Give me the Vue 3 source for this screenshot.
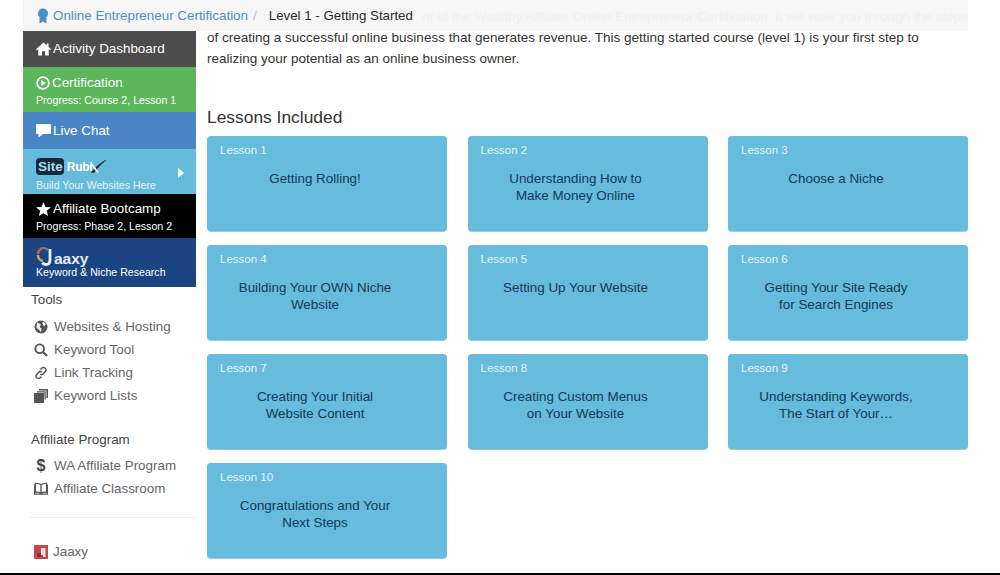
<script setup>
const lessons = [
  { n: 1, lines: ['Getting Rolling!'] },
  { n: 2, lines: ['Understanding How to', 'Make Money Online'] },
  { n: 3, lines: ['Choose a Niche'] },
  { n: 4, lines: ['Building Your OWN Niche', 'Website'] },
  { n: 5, lines: ['Setting Up Your Website'] },
  { n: 6, lines: ['Getting Your Site Ready', 'for Search Engines'] },
  { n: 7, lines: ['Creating Your Initial', 'Website Content'] },
  { n: 8, lines: ['Creating Custom Menus', 'on Your Website'] },
  { n: 9, lines: ['Understanding Keywords,', 'The Start of Your…'] },
  { n: 10, lines: ['Congratulations and Your', 'Next Steps'] }
]
</script>

<template>
  <div class="page">
    <header class="crumbs">
      <svg class="ribbon" viewBox="0 0 12 16" width="12" height="16">
        <circle cx="6" cy="5.5" r="5" fill="#4a90c4" />
        <path d="M2.5 9.5V15.5L6 13.5L9.5 15.5V9.5Z" fill="#4a90c4" />
      </svg>
      <a class="crumb-link">Online Entrepreneur Certification</a>
      <span class="crumb-sep">/</span>
      <span class="crumb-here">Level 1 - Getting Started</span>
      <span class="crumb-ghost">nt of the Wealthy Affiliate Online Entrepreneur Certification. It will walk you through the steps</span>
    </header>

    <div class="body">
      <aside class="side">
        <nav class="blocks">
          <a class="block dash">
            <span class="row">
              <svg viewBox="0 0 16 14" width="15" height="14"><path d="M8 0L0 7.2L1 8.3L2.4 7.1V14H6.4V9.4H9.6V14H13.6V7.1L15 8.3L16 7.2L13.4 4.8V1H11.4V3Z" fill="#fff" /></svg>
              Activity Dashboard
            </span>
          </a>
          <a class="block cert">
            <span class="row">
              <svg viewBox="0 0 14 14" width="14" height="14"><circle cx="7" cy="7" r="5.9" fill="none" stroke="#fff" stroke-width="1.7" /><path d="M5.3 4L10 7L5.3 10Z" fill="#fff" /></svg>
              Certification
            </span>
            <small>Progress: Course 2, Lesson 1</small>
          </a>
          <a class="block chat">
            <span class="row">
              <svg viewBox="0 0 15 14" width="15" height="14"><path d="M1 0H14Q15 0 15 1V9Q15 10 14 10H7L2.5 13.5V10H1Q0 10 0 9V1Q0 0 1 0Z" fill="#fff" /></svg>
              Live Chat
            </span>
          </a>
          <a class="block rubix">
            <span class="logo-row">
              <span class="site-pill">Site</span>
              <span class="rubix-word">Rubi</span>
              <svg class="rubix-x" viewBox="0 0 18 15" width="18" height="16"><path d="M1 14C5 9 11 3 17 1C12 5 7 10 4 14.500Z" fill="#1b2a38" /><path d="M1 5L8 14" stroke="#fff" stroke-width="1.800" /></svg>
            </span>
            <small class="rubix-note">Build Your Websites Here</small>
            <svg class="caret" viewBox="0 0 6 10" width="6" height="10"><path d="M0 0L6 5L0 10Z" fill="#fff" /></svg>
          </a>
          <a class="block camp">
            <span class="row">
              <svg viewBox="0 0 16 15" width="15" height="14"><path d="M8 0L10.200 5.300L16 5.700L11.500 9.400L13 15L8 12L3 15L4.500 9.400L0 5.700L5.800 5.300Z" fill="#fff" /></svg>
              Affiliate Bootcamp
            </span>
            <small>Progress: Phase 2, Lesson 2</small>
          </a>
          <a class="block jaaxy">
            <span class="jaaxy-row">
              <svg class="jaaxy-mark" viewBox="0 0 17 19" width="17" height="19">
                <path d="M2 7A6 6 0 0 1 8 1" fill="none" stroke="#b5653f" stroke-width="2.500" />
                <path d="M2 8A6 6 0 0 0 7 14" fill="none" stroke="#c9a945" stroke-width="2.500" />
                <path d="M8 1A6 6 0 0 1 12 3" fill="none" stroke="#5a86b8" stroke-width="2" />
                <path d="M14 2V13Q14 17.500 10 17.500Q7.500 17.500 6.500 15.500" fill="none" stroke="#e8eef6" stroke-width="2.800" />
              </svg>
              <span class="jaaxy-word">aaxy</span>
            </span>
            <small class="jaaxy-note">Keyword &amp; Niche Research</small>
          </a>
        </nav>

        <h4 class="group first">Tools</h4>
        <ul class="links">
          <li>
            <svg viewBox="0 0 14 14" width="14" height="14"><circle cx="7" cy="7" r="6.500" fill="#555" /><path d="M3 2.500L7 4.500L5.500 7L7.500 8.500L7 12L4.800 9.500L2.500 8ZM9 1.500L12 4L10 6.500L8.500 4Z" fill="#f4f4f4" /></svg>
            Websites &amp; Hosting
          </li>
          <li>
            <svg viewBox="0 0 14 14" width="14" height="14"><circle cx="5.700" cy="5.700" r="4.300" fill="none" stroke="#555" stroke-width="1.900" /><path d="M8.800 8.800L13 13" stroke="#555" stroke-width="2.300" /></svg>
            Keyword Tool
          </li>
          <li>
            <svg viewBox="0 0 14 14" width="14" height="14"><path d="M6.500 3.500L8 2Q9.500 0.800 11 2Q12.800 3.500 11.500 5.200L9 8Q7.600 9.200 6.200 8" fill="none" stroke="#555" stroke-width="1.500" /><path d="M7.500 10.500L6 12Q4.500 13.200 3 12Q1.200 10.500 2.500 8.800L5 6Q6.400 4.800 7.800 6" fill="none" stroke="#555" stroke-width="1.500" /></svg>
            Link Tracking
          </li>
          <li>
            <svg viewBox="0 0 14 14" width="14" height="14"><path d="M5 0H14V9H12.500V1.500H5Z" fill="#555" /><path d="M3 2.200H11.800V10.500H10.500V3.500H3Z" fill="#555" /><rect x="0" y="4" width="10" height="10" fill="#555" /></svg>
            Keyword Lists
          </li>
        </ul>

        <h4 class="group second">Affiliate Program</h4>
        <ul class="links tight">
          <li>
            <span class="dollar">$</span>
            WA Affiliate Program
          </li>
          <li>
            <svg viewBox="0 0 15 14" width="14" height="14"><path d="M7.500 2.500Q5 0.500 1.500 1V10.500Q5 10 7.500 11.500Q10 10 13.500 10.500V1Q10 0.500 7.500 2.500ZM7.500 2.500V11.500M1.500 3H0.500V12.500H14.500V3H13.500" fill="none" stroke="#555" stroke-width="1.400" /></svg>
            Affiliate Classroom
          </li>
        </ul>

        <hr class="rule" />

        <a class="foot-link">
          <svg viewBox="0 0 14 14" width="14" height="14"><rect width="14" height="14" fill="#c0484f" /><path d="M7 8V3H11.500V12H9V10H7V12H2.500V8Z" fill="#f3dcdc" /><rect x="2.500" y="8" width="4.500" height="4" fill="#8e2f36" /></svg>
          Jaaxy
        </a>
      </aside>

      <main class="main">
        <p class="intro">of creating a successful online business that generates revenue. This getting started course (level 1) is your first step to realizing your potential as an online business owner.</p>
        <h3 class="heading">Lessons Included</h3>
        <div class="grid">
          <a v-for="l in lessons" :key="l.n" class="card">
            <span class="num">Lesson {{ l.n }}</span>
            <span class="title">
              <span v-for="t in l.lines" :key="t" class="title-line">{{ t }}</span>
            </span>
          </a>
        </div>
      </main>
    </div>
    <div class="bottom-line"></div>
  </div>
</template>

<style scoped>
.page {
  width: 1000px;
  height: 575px;
  overflow: hidden;
  background: #fff;
  font-family: "Liberation Sans", Arial, sans-serif;
  color: #333;
  display: flex;
  flex-direction: column;
}
.page * { box-sizing: border-box; }

.crumbs {
  position: relative;
  flex: none;
  height: 31px;
  margin: 0 32px 0 23px;
  padding: 0 0 0 14px;
  background: #f6f6f6;
  display: flex;
  align-items: center;
  font-size: 13.4px;
}
.ribbon { margin-right: 4px; }
.crumb-link { color: #4a8fc5; }
.crumb-sep { color: #bbb; margin: 0 12px 0 5px; }
.crumb-here { color: #2a2a2a; font-size: 13.3px; }
.crumb-ghost {
  position: absolute;
  right: 0;
  top: 9px;
  font-size: 13.4px;
  color: #efefef;
  white-space: nowrap;
}

.body {
  flex: 1;
  display: flex;
  min-height: 0;
  padding-left: 23px;
}

.side {
  flex: none;
  width: 173px;
}
.blocks { display: flex; flex-direction: column; }
.block {
  position: relative;
  display: flex;
  flex-direction: column;
  padding: 0 0 0 13px;
  color: #fff;
  font-size: 13.4px;
}
.block small { font-size: 10.6px; line-height: 13px; }
.row { display: flex; align-items: center; gap: 2px; line-height: 16px; }
.row svg { flex: none; }

.dash { height: 36px; background: #4c4c4c; justify-content: center; }
.cert { height: 45px; background: #5cb65c; padding-top: 8px; }
.cert small { margin-top: 3px; }
.chat { height: 37px; background: #4a86c6; justify-content: center; }
.rubix { height: 45px; background: #66bbdd; padding-top: 9px; }
.camp { height: 44px; background: #000; padding-top: 7px; }
.camp small { margin-top: 3px; }
.jaaxy { height: 49px; background: #1b4582; padding-top: 8px; }

.logo-row { display: flex; align-items: center; height: 17px; }
.site-pill {
  background: #15293c;
  color: #a9dcef;
  font-size: 13.5px;
  font-weight: 700;
  line-height: 17px;
  padding: 0 1px 0 2px;
  border-radius: 4px;
}
.rubix-word {
  margin-left: 3px;
  font-size: 12px;
  font-weight: 700;
  letter-spacing: -0.3px;
  color: #fff;
}
.rubix-x { margin-left: -2px; margin-top: -1px; }
.rubix-note { margin-top: 4px; color: #e6f5fb; }
.caret { position: absolute; right: 12px; top: 19px; }

.jaaxy-row { display: flex; align-items: flex-end; height: 20px; }
.jaaxy-mark { flex: none; }
.jaaxy-word { font-size: 15.5px; font-weight: 700; line-height: 15px; color: #e8eef6; padding-left: 1px; }
.jaaxy-note { margin-top: 0; }

.group {
  margin: 0;
  padding-left: 8px;
  font-size: 13.4px;
  font-weight: 400;
  line-height: 16px;
  color: #444;
}
.group.first { margin-top: 5px; }
.group.second { margin-top: 25px; }

.links {
  list-style: none;
  margin: 7px 0 0;
  padding: 0 0 0 11px;
}
.links.tight { margin-top: 6px; }
.links li {
  display: flex;
  align-items: center;
  gap: 6px;
  height: 23px;
  font-size: 13.4px;
  color: #666;
}
.links svg { flex: none; }
.dollar {
  flex: none;
  width: 14px;
  text-align: center;
  font-size: 16px;
  font-weight: 700;
  color: #444;
}

.rule {
  margin: 17px 0 0 7px;
  border: 0;
  border-top: 1px solid #f0f0f0;
}
.foot-link {
  display: flex;
  align-items: center;
  gap: 5px;
  margin: 26px 0 0 11px;
  font-size: 13.4px;
  line-height: 16px;
  color: #666;
}

.main {
  flex: none;
  width: 761px;
  margin-left: 11px;
}
.intro {
  margin: -4px 0 0;
  font-size: 13.5px;
  line-height: 21px;
  color: #333;
}
.heading {
  margin: 36px 0 0;
  font-size: 17.4px;
  font-weight: 400;
  line-height: 24px;
  color: #333;
}
.grid {
  margin-top: 7px;
  display: grid;
  grid-template-columns: repeat(3, 240px);
  grid-auto-rows: 96px;
  justify-content: space-between;
  row-gap: 13px;
}
.card {
  display: flex;
  flex-direction: column;
  padding: 7px 37px 0 13px;
  background: #67bbdd;
  border-radius: 4px;
  border-bottom: 1px solid #8fd0ea;
}
.num {
  font-size: 11.5px;
  line-height: 14px;
  color: #e6f5fb;
}
.title {
  margin-top: 13px;
  display: flex;
  flex-direction: column;
  align-items: center;
  font-size: 13.4px;
  line-height: 17px;
  color: #123a52;
}

.bottom-line {
  flex: none;
  height: 2px;
  background: #000;
}
</style>
